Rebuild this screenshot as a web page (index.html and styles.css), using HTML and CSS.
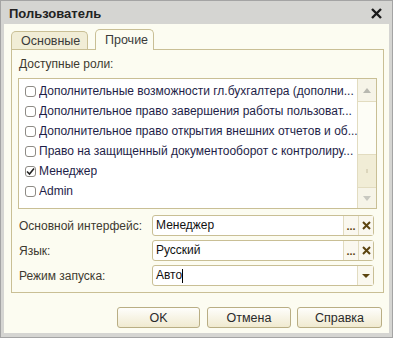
FILE: index.html
```html
<!DOCTYPE html>
<html>
<head>
  <title>Пользователь</title>
  <link rel="stylesheet" href="styles.css">
</head>
<body>
  <div class="window">
    <div class="titlebar">
      <span class="title">Пользователь</span>
      <svg class="close" width="11" height="11" viewBox="0 0 11 11">
        <path d="M1 1 L10 10 M10 1 L1 10" stroke="#1a1a1a" stroke-width="2.4" />
      </svg>
    </div>
    <div class="content">
      <div class="tabs">
        <div class="tab">Основные</div>
        <div class="tab active">Прочие</div>
      </div>
      <div class="panel">
        <div class="caption">Доступные роли:</div>
        <div class="list">
          <div class="items">
            <div class="item"><span class="check"></span><span class="text">Дополнительные возможности гл.бухгалтера (дополни...</span></div>
            <div class="item"><span class="check"></span><span class="text">Дополнительное право завершения работы пользоват...</span></div>
            <div class="item"><span class="check"></span><span class="text">Дополнительное право открытия внешних отчетов и об...</span></div>
            <div class="item"><span class="check"></span><span class="text">Право на защищенный документооборот с контролиру...</span></div>
            <div class="item"><span class="check checked"><svg width="9" height="9" viewBox="0 0 9 9"><path d="M1 4.5 L3.5 7 L8 1.5" fill="none" stroke="#222" stroke-width="1.6" /></svg></span><span class="text">Менеджер</span></div>
            <div class="item"><span class="check"></span><span class="text">Admin</span></div>
          </div>
          <div class="scrollbar">
            <div class="sb-btn"><span class="arrow-up"></span></div>
            <div class="sb-track"></div>
            <div class="sb-thumb"><span class="grip"></span></div>
            <div class="sb-btn"><span class="arrow-down"></span></div>
          </div>
        </div>
        <div class="field">
          <label class="field-label">Основной интерфейс:</label>
          <div class="input">
            <span class="value">Менеджер</span>
            <span class="btn-dots">...</span>
            <span class="btn-clear"><svg width="9" height="9" viewBox="0 0 9 9"><path d="M1 1 L8 8 M8 1 L1 8" stroke="#5c4510" stroke-width="2" /></svg></span>
          </div>
        </div>
        <div class="field">
          <label class="field-label">Язык:</label>
          <div class="input">
            <span class="value">Русский</span>
            <span class="btn-dots">...</span>
            <span class="btn-clear"><svg width="9" height="9" viewBox="0 0 9 9"><path d="M1 1 L8 8 M8 1 L1 8" stroke="#5c4510" stroke-width="2" /></svg></span>
          </div>
        </div>
        <div class="field">
          <label class="field-label">Режим запуска:</label>
          <div class="input">
            <span class="value">Авто<span class="caret"></span></span>
            <span class="btn-drop"><span class="arrow-drop"></span></span>
          </div>
        </div>
      </div>
      <div class="buttons">
        <button class="button ok">OK</button>
        <button class="button cancel">Отмена</button>
        <button class="button help">Справка</button>
      </div>
    </div>
  </div>
</body>
</html>
```

FILE: styles.css
```css
body {
  margin: 0;
  padding: 0;
  font-family: "Liberation Sans", Arial, sans-serif;
  font-size: 12px;
  background: #d5d5d2;
}

.window {
  width: 393px;
  height: 338px;
  box-sizing: border-box;
  border: 1px solid #a4a4a4;
  background: #d5d5d2;
  padding: 0 3px 4px 3px;
  display: flex;
  flex-direction: column;
}

.titlebar {
  height: 23px;
  display: flex;
  align-items: center;
  justify-content: space-between;
  padding: 0 5px 0 5px;
}

.title {
  font-weight: bold;
  font-size: 13px;
  color: #222;
  margin-top: 1px;
}

.close {
  margin-top: 2px;
  margin-right: 2px;
}

.content {
  flex: 1;
  background: #fcfcf1;
  padding: 5px 5px 0 7px;
  display: flex;
  flex-direction: column;
}

.tabs {
  display: flex;
  align-items: flex-end;
  height: 20px;
  gap: 7px;
  position: relative;
  z-index: 1;
}

.tab {
  height: 18px;
  width: 77px;
  box-sizing: border-box;
  border: 1px solid #c9bf95;
  border-bottom: none;
  border-radius: 5px 5px 0 0;
  background: #f1edd6;
  color: #3a3a3a;
  font-size: 12.5px;
  line-height: 18px;
  padding-left: 9px;
}

.tab.active {
  height: 21px;
  width: 59px;
  background: #fcfcf1;
  padding-left: 9px;
  line-height: 20px;
  margin-bottom: -1px;
}

.panel {
  border: 1px solid #c9bf95;
  width: 373px;
  box-sizing: border-box;
  height: 244px;
  padding: 6px 6px 0 6px;
}

.caption {
  color: #3e3a30;
  font-size: 12px;
  line-height: 16px;
  margin-bottom: 6px;
  padding-left: 1px;
}

.list {
  display: flex;
  height: 131px;
  box-sizing: border-box;
  border: 1px solid #c9bf95;
  background: #fff;
}

.items {
  flex: 1;
  padding: 2px 0 0 6px;
  overflow: hidden;
}

.item {
  height: 20px;
  display: flex;
  align-items: center;
  white-space: nowrap;
}

.check {
  width: 11px;
  height: 11px;
  box-sizing: border-box;
  border: 1px solid #8d8a84;
  border-radius: 3px;
  background: #fff;
  margin-right: 3px;
  display: flex;
  align-items: center;
  justify-content: center;
  flex-shrink: 0;
}

.text {
  color: #1e1e48;
  overflow: hidden;
}

.scrollbar {
  width: 18px;
  display: flex;
  flex-direction: column;
  border-left: 1px solid #e2dcc0;
  background: #fdfdf6;
}

.sb-btn {
  height: 22px;
  display: flex;
  align-items: center;
  justify-content: center;
  background: #f6f4e8;
  border-bottom: 1px solid #e2dcc0;
}

.sb-btn:last-child {
  border-bottom: none;
  border-top: 1px solid #e2dcc0;
  height: 20px;
}

.arrow-up {
  border-left: 4px solid transparent;
  border-right: 4px solid transparent;
  border-bottom: 5px solid #b8b8b0;
}

.arrow-down {
  border-left: 4px solid transparent;
  border-right: 4px solid transparent;
  border-top: 5px solid #c8c8c0;
}

.sb-track {
  flex: 1;
}

.sb-thumb {
  height: 32px;
  background: #f1edd6;
  border-top: 1px solid #e2dcc0;
  display: flex;
  align-items: center;
  justify-content: center;
}

.grip {
  width: 2px;
  height: 4px;
  background: #dcd6bc;
}

.field {
  display: flex;
  align-items: center;
  height: 21px;
  margin-top: 4px;
}

.list + .field {
  margin-top: 6px;
}

.field-label {
  width: 133px;
  color: #3e3a30;
  font-size: 12px;
  padding-left: 1px;
  white-space: nowrap;
}

.input {
  width: 222px;
  height: 21px;
  box-sizing: border-box;
  border: 1px solid #c9bf95;
  border-radius: 3px;
  background: #fff;
  display: flex;
  align-items: stretch;
}

.value {
  flex: 1;
  color: #111;
  font-size: 12px;
  line-height: 19px;
  padding-left: 3px;
  display: flex;
  align-items: center;
}

.caret {
  width: 1px;
  height: 14px;
  background: #000;
}

.btn-dots,
.btn-clear,
.btn-drop {
  width: 15px;
  display: flex;
  align-items: center;
  justify-content: center;
  background: #faf8ef;
  border-left: 1px solid #e2dcc0;
}

.btn-dots {
  color: #5c4510;
  font-weight: bold;
  font-size: 11px;
  line-height: 12px;
  align-items: flex-end;
  padding-bottom: 3px;
  box-sizing: border-box;
}

.btn-clear {
  width: 14px;
}

.arrow-drop {
  border-left: 4px solid transparent;
  border-right: 4px solid transparent;
  border-top: 4px solid #5c4510;
}

.buttons {
  display: flex;
  justify-content: flex-end;
  gap: 6px;
  margin-top: 14px;
  padding-right: 2px;
}

.button {
  height: 21px;
  box-sizing: border-box;
  border: 1px solid #b9ae84;
  border-radius: 3px;
  background: linear-gradient(#fefefb, #f0ead0);
  color: #2a2a2a;
  font-family: "Liberation Sans", Arial, sans-serif;
  font-size: 12.5px;
  padding: 0;
}

.ok {
  width: 83px;
  margin-right: 1px;
}

.cancel {
  width: 84px;
}

.help {
  width: 85px;
}
```
